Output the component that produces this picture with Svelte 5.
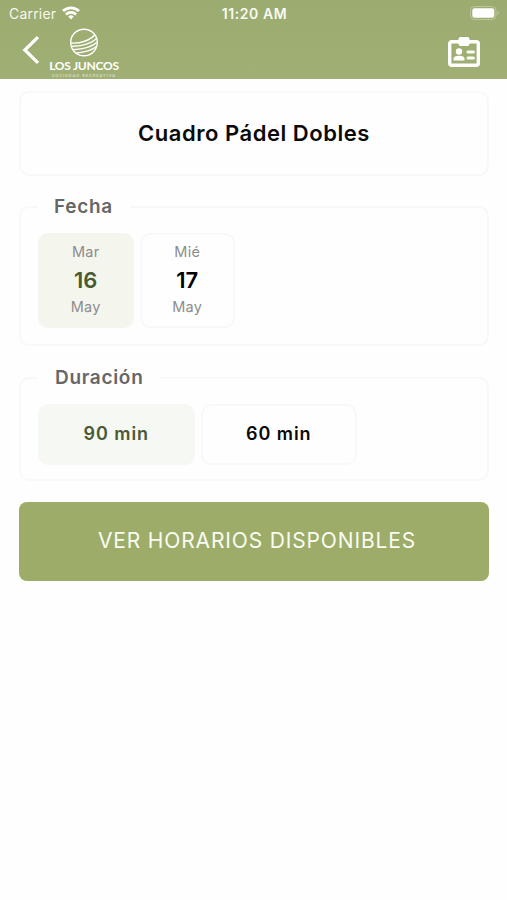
<script>
  const dates = [
    { weekday: 'Mar', day: '16', month: 'May' },
    { weekday: 'Mié', day: '17', month: 'May' }
  ];
  const durations = ['90 min', '60 min'];
  let date = $state(0);
  let duration = $state(0);
</script>

<div class="screen">
  <header>
    <div class="status">
      <div class="carrier">
        <span>Carrier</span>
        <svg width="18" height="14" viewBox="0 0 18 14" fill="none" stroke="#fff" stroke-width="2.7">
          <path d="M1 5.1a11.6 11.6 0 0 1 16 0M3.9 8.4a7.4 7.4 0 0 1 10.2 0" />
          <path d="M9 13.5 6.2 10.6a4 4 0 0 1 5.6 0z" fill="#fff" stroke="none" />
        </svg>
      </div>
      <span class="clock">11:20 AM</span>
      <svg class="battery" width="30" height="14" viewBox="0 0 30 14">
        <rect x=".5" y=".5" width="25.5" height="13" rx="4" fill="none" stroke="#fff" stroke-opacity=".3" />
        <rect x="2.3" y="2.3" width="22" height="9.4" rx="2.2" fill="#fff" />
        <path d="M27.5 4.8q2.4 2.2 0 4.4z" fill="#fff" fill-opacity=".4" />
      </svg>
    </div>
    <nav>
      <button class="icon" aria-label="Volver">
        <svg width="18" height="28" viewBox="0 0 18 28" fill="none" stroke="#fff" stroke-width="3.2">
          <path d="M16 1.2 2.8 14 16 26.8" />
        </svg>
      </button>
      <div class="brand">
        <svg width="30" height="30" viewBox="0 0 30 30" fill="none" stroke="#fff" stroke-width="1.4">
          <circle cx="15" cy="15.5" r="13.3" />
          <path d="M2 16C11 17 21.5 13 25.5 8M2.4 19.3C12 19.5 22.5 16.5 27.3 11.5M4 22.7C14 22 23 20 28 15.2M7.5 26C15 25.4 22 23.8 27.5 19.5" />
        </svg>
        <b>LOS JUNCOS</b>
        <small>SOCIEDAD RECREATIVA</small>
      </div>
      <button class="icon card-icon" aria-label="Carnet">
        <svg width="34" height="32" viewBox="0 0 34 32">
          <rect x="2.7" y="5.7" width="28.6" height="23.6" rx="2" fill="none" stroke="#fff" stroke-width="3.4" />
          <rect x="11.5" y="1" width="11" height="9" rx="2" fill="#fff" />
          <circle cx="12" cy="15.5" r="3.2" fill="#fff" />
          <path d="M6.5 24.5v-1.7q0-3 5.5-3t5.5 3v1.700z" fill="#fff" />
          <path d="M21 16h5.4M21 22h5.4" stroke="#fff" stroke-width="3" stroke-linecap="round" />
        </svg>
      </button>
    </nav>
  </header>

  <main>
    <h1>Cuadro Pádel Dobles</h1>

    <fieldset class="dates">
      <legend>Fecha</legend>
      <div class="options">
        {#each dates as item, i}
          <button class="option date" class:selected={date === i} onclick={() => (date = i)}>
            <span>{item.weekday}</span>
            <strong>{item.day}</strong>
            <span>{item.month}</span>
          </button>
        {/each}
      </div>
    </fieldset>

    <fieldset class="durations">
      <legend>Duración</legend>
      <div class="options">
        {#each durations as label, i}
          <button class="option duration" class:selected={duration === i} onclick={() => (duration = i)}>{label}</button>
        {/each}
      </div>
    </fieldset>

    <button class="submit">VER HORARIOS DISPONIBLES</button>
  </main>
</div>

<style>
  :global(body) {
    background: #fefefe;
  }
  .screen {
    min-height: 900px;
    font-family: Inter, "Liberation Sans", sans-serif;
    color: #0a0a0a;
  }
  button {
    font: inherit;
    color: inherit;
    cursor: pointer;
    padding: 0;
  }
  svg {
    display: block;
  }
  header {
    height: 79px;
    color: #fff;
    background: linear-gradient(#9cab70, #a0b074);
  }
  .status {
    height: 27px;
    padding: 0 7px 0 9px;
    display: grid;
    grid-template-columns: 1fr auto 1fr;
    align-items: center;
    font-size: 14px;
  }
  .carrier {
    display: flex;
    align-items: center;
    gap: 6px;
    letter-spacing: 0.2px;
    color: #f6f8ee;
  }
  .carrier svg {
    margin-top: -2px;
  }
  .clock {
    font-size: 14px;
    font-weight: 600;
    letter-spacing: 0.6px;
    color: #f8faf2;
  }
  .battery {
    justify-self: end;
    margin-top: -1px;
  }
  nav {
    height: 52px;
    padding: 0 26px 0 22px;
    display: flex;
    align-items: flex-start;
  }
  .icon {
    border: 0;
    background: none;
    margin-top: 9px;
  }
  .brand {
    width: 76px;
    margin-left: 6px;
    display: flex;
    flex-direction: column;
    align-items: center;
    white-space: nowrap;
  }
  .brand b {
    font: 700 12px/14px Lato, sans-serif;
    letter-spacing: -0.25px;
    margin-top: 2px;
  }
  .brand small {
    font: 700 4px/5px Lato, sans-serif;
    letter-spacing: 1px;
    opacity: 0.55;
  }
  .card-icon {
    margin-left: auto;
  }
  main {
    padding: 12px 18px 0 19px;
    display: flex;
    flex-direction: column;
  }
  h1 {
    box-sizing: border-box;
    height: 85px;
    margin: 0;
    border: 2px solid #f8f8f8;
    border-radius: 10px;
    font-size: 22px;
    font-weight: 600;
    letter-spacing: 0.53px;
    line-height: 80px;
    text-align: center;
  }
  fieldset {
    box-sizing: border-box;
    min-width: 0;
    margin: 0;
    padding: 0 17px;
    border: 2px solid #f8f8f8;
    border-radius: 10px;
  }
  legend {
    height: 26px;
    line-height: 26px;
    padding: 0 17px 0 16px;
    color: #666;
    font-size: 19px;
    font-weight: 600;
    letter-spacing: 0.7px;
  }
  .dates {
    height: 152px;
    margin-top: 18px;
  }
  .durations {
    height: 116px;
    margin-top: 19px;
  }
  .durations legend {
    padding-left: 17px;
  }
  .options {
    display: flex;
    gap: 6px;
    margin-top: 13px;
  }
  .option {
    box-sizing: border-box;
    border: 2px solid #f8f8f8;
    border-radius: 10px;
    background: #fefefe;
  }
  .date {
    width: 95.5px;
    height: 95px;
    padding-bottom: 2px;
    display: flex;
    flex-direction: column;
    align-items: center;
    justify-content: center;
    color: #8d8d8d;
    font-size: 14.5px;
    letter-spacing: 0.3px;
    line-height: 26px;
  }
  .date strong {
    color: #000;
    font-size: 22px;
    font-weight: 600;
    letter-spacing: 0;
    line-height: 27px;
    padding-top: 2px;
  }
  .selected {
    background: #f4f6ee;
    border-color: #f4f6ee;
  }
  .date.selected strong,
  .duration.selected {
    color: #4b5933;
  }
  .duration {
    width: 156.5px;
    height: 61px;
    padding-bottom: 2px;
    font-size: 18px;
    font-weight: 600;
    letter-spacing: 0.95px;
  }
  .duration.selected {
    background: #f5f8f3;
    border-color: #f5f8f3;
  }
  .submit {
    height: 79px;
    margin-top: 21px;
    padding: 0 0 2px 6px;
    border: 0;
    border-radius: 8px;
    background: #9dad69;
    color: #fafcf4;
    font-size: 21px;
    letter-spacing: 0.85px;
  }
</style>
